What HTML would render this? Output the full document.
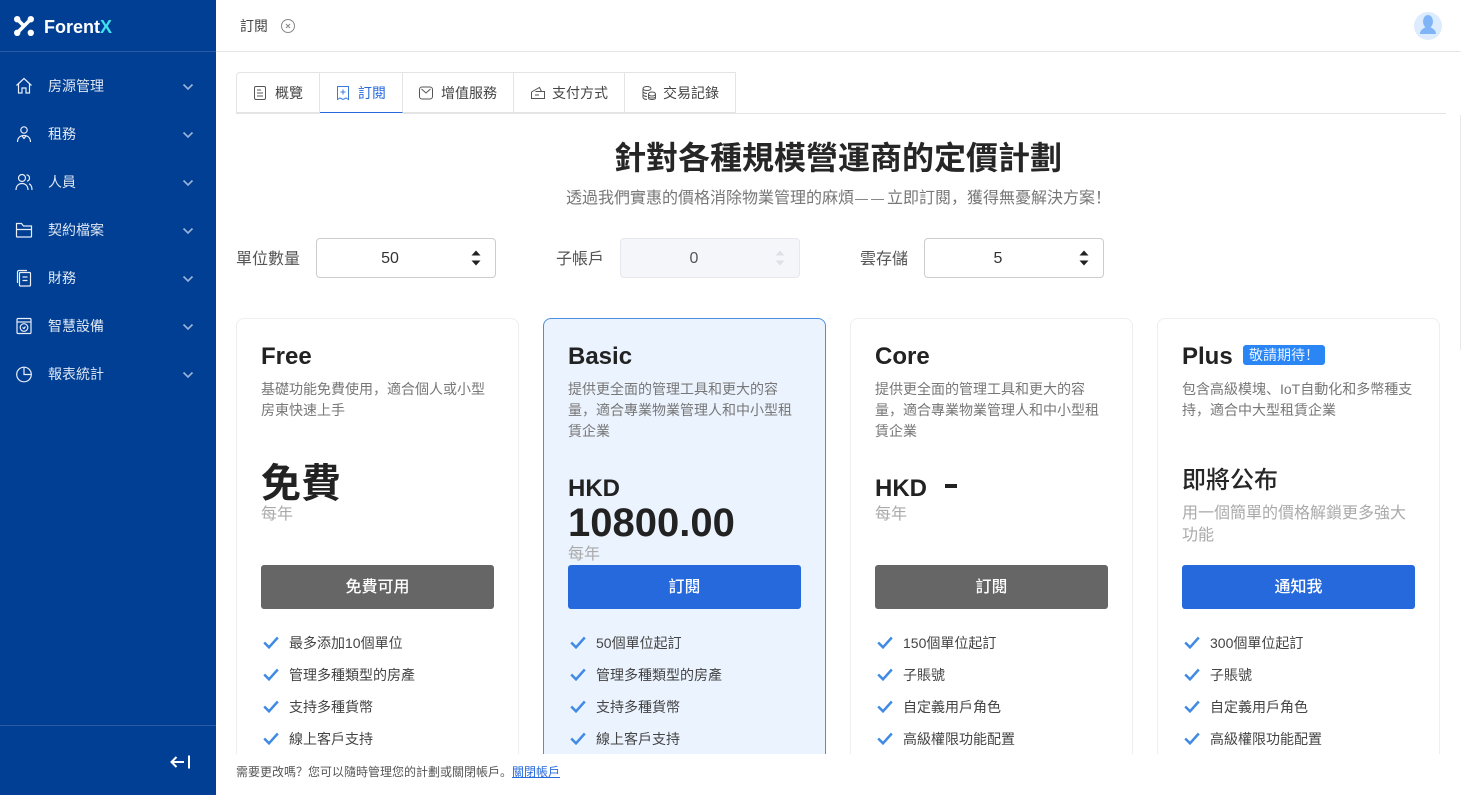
<!DOCTYPE html>
<html lang="zh-CN"><head><meta charset="utf-8"><title>ForentX</title>
<style>
*{box-sizing:border-box}
html,body{margin:0;padding:0;width:1461px;height:795px;overflow:hidden;background:#fff}
body{font-family:"Liberation Sans","Noto Sans CJK SC",sans-serif;color:#262626;position:relative}
.a{position:absolute;white-space:nowrap}
#side{position:absolute;left:0;top:0;width:216px;height:795px;background:#003f94}
.mi{position:absolute;left:48px;font-size:14px;line-height:20px;color:#dfe7f3;white-space:nowrap}
.chev{position:absolute;left:182px;width:12px;height:12px}
.ic{position:absolute;left:14px;width:20px;height:20px}
.tab{position:absolute;top:72px;height:41px;border:1px solid #e4e4e4;border-left:0;font-size:14px;line-height:41px;color:#444;white-space:nowrap}
.tab svg{position:absolute;top:12px;width:16px;height:16px}
.tab span{position:absolute;top:0}
.lb{position:absolute;top:249px;font-size:16px;line-height:22px;color:#555;white-space:nowrap}
.inp{position:absolute;top:238px;height:40px;border:1px solid #ccc;border-radius:4px;background:#fff;font-size:16px;line-height:40px;color:#333;text-align:center;padding-right:32px}
.inp svg{position:absolute;right:13px;top:10px;width:12px;height:18px}
.card{position:absolute;top:318px;width:283px;height:520px;border:1px solid #eee;border-radius:8px;background:#fff}
.card.b{background:#ebf3fe;border-color:#4a90e2}
.t{position:absolute;font-size:24px;font-weight:700;line-height:30px;color:#222;white-space:nowrap;top:342px}
.d{position:absolute;width:233px;font-size:14px;line-height:21px;color:#777;top:379px}
.yr{position:absolute;font-size:16px;line-height:20px;color:#aaa;white-space:nowrap}
.btn{position:absolute;top:565px;width:233px;height:44px;border-radius:3px;color:#fff;font-size:16px;line-height:45px;text-align:center;font-weight:500}
.g{background:#666}.bl{background:#2669dd}
.li{position:absolute;font-size:14px;line-height:20px;color:#444;white-space:nowrap}
.ck{position:absolute;width:16px;height:14px}
#foot{position:absolute;left:216px;top:754px;width:1245px;height:41px;background:#fff}
</style></head><body>

<div class="a" style="left:216px;top:51px;width:1245px;height:1px;background:#e6e6e6"></div>
<div class="a" style="left:240px;top:16px;font-size:14px;line-height:20px;color:#444">訂閱</div>
<svg class="a" style="left:280px;top:18px" width="16" height="16" viewBox="0 0 16 16" fill="none" stroke="#888"><circle cx="8" cy="8" r="6.500"/><path d="M6 6l4 4M10 6l-4 4"/></svg>
<svg class="a" style="left:1414px;top:12px" width="28" height="28" viewBox="0 0 28 28"><circle cx="14" cy="14" r="14" fill="#dcebfd"/><ellipse cx="14" cy="9.500" rx="5" ry="6.500" fill="#7fb5f7"/><path d="M6 22c0-4 3-5 5.500-7h5c2.500 2 5.500 3 5.500 7z" fill="#7fb5f7"/></svg>

<div class="tab" style="left:236px;width:84px;border-left:1px solid #e4e4e4;border-radius:4px 0 0 0"><svg style="left:15px" viewBox="0 0 16 16" fill="none" stroke="#555"><rect x="2.500" y="1.500" width="11" height="13" rx="1.500"/><path d="M5 5h4M5 8h6M5 11h6"/></svg><span style="left:38px">概覽</span></div>
<div class="tab" style="left:320px;width:83px;color:#2669dd;border-bottom:1px solid #2669dd"><svg style="left:15px" viewBox="0 0 16 16" fill="none" stroke="#3b7be0"><path d="M2.500 1.500h11v13l-2.500-1.500-3 1.500-3-1.500-2.500 1.500z"/><path d="M8 4.500v5M5.500 7h5"/></svg><span style="left:38px">訂閱</span></div>
<div class="tab" style="left:403px;width:111px"><svg style="left:15px" viewBox="0 0 16 16" fill="none" stroke="#555"><rect x="1.500" y="2" width="13" height="12" rx="2.500"/><path d="M3.500 4l4.500 4 4.500-4"/></svg><span style="left:38px">增值服務</span></div>
<div class="tab" style="left:514px;width:111px"><svg style="left:16px" viewBox="0 0 16 16" fill="none" stroke="#555"><path d="M1.500 7v6.500h13v-7h-9"/><path d="M1.500 7l8-4.500 2 4"/><path d="M5 10h4"/></svg><span style="left:38px">支付方式</span></div>
<div class="tab" style="left:625px;width:111px"><svg style="left:16px" viewBox="0 0 16 16" fill="none" stroke="#555"><ellipse cx="6" cy="3.500" rx="4" ry="2"/><path d="M2 3.500v9c0 1 2 2 4 2M2 6.500c0 1 2 2 4 2M2 9.500c0 1 2 2 4 2"/><ellipse cx="11" cy="9" rx="3.500" ry="2"/><path d="M7.500 9v4c0 1 1.500 1.500 3.500 1.500s3.500-.5 3.500-1.500V9M7.500 11.500c0 1 1.500 1.500 3.500 1.500s3.500-.5 3.500-1.500"/></svg><span style="left:38px">交易記錄</span></div>
<div class="a" style="left:236px;top:113px;width:84px;height:1px;background:#e4e4e4"></div>
<div class="a" style="left:403px;top:113px;width:1043px;height:1px;background:#e4e4e4"></div>
<div class="a" style="left:1460px;top:115px;width:1px;height:235px;background:#e8e8e8"></div>

<div class="a" style="left:216px;width:1245px;top:136px;text-align:center;font-size:32px;font-weight:700;line-height:44px;color:#262626;text-indent:-1px">針對各種規模營運商的定價計劃</div>
<div class="a" style="left:216px;width:1245px;top:187px;text-align:center;font-size:16px;line-height:24px;color:#777">透過我們實惠的價格消除物業管理的麻煩<span style="font-family:'Liberation Sans';font-size:13px;letter-spacing:3px;margin-left:1px">——</span>立即訂閱&#xFF0C;獲得無憂解決方案&#xFF01;</div>

<div class="lb" style="left:236px">單位數量</div>
<div class="inp" style="left:316px;width:180px">50<svg viewBox="0 0 12 18"><path d="M6 1.500l4.500 5h-9zM6 16.500l4.500-5h-9z" fill="#222"/></svg></div>
<div class="lb" style="left:556px">子帳戶</div>
<div class="inp" style="left:620px;width:180px;background:#f4f6fa;border-color:#e6e8ec;color:#555">0<svg viewBox="0 0 12 18"><path d="M6 1.500l4.500 5h-9zM6 16.500l4.500-5h-9z" fill="#dde0e5"/></svg></div>
<div class="lb" style="left:860px">雲存儲</div>
<div class="inp" style="left:924px;width:180px">5<svg viewBox="0 0 12 18"><path d="M6 1.500l4.500 5h-9zM6 16.500l4.500-5h-9z" fill="#222"/></svg></div>

<div class="card" style="left:236px"></div>
<div class="card b" style="left:543px"></div>
<div class="card" style="left:850px"></div>
<div class="card" style="left:1157px"></div>

<div class="t" style="left:261px">Free</div>
<div class="d" style="left:261px">基礎功能免費使用&#xFF0C;適合個人或小型房東快速上手</div>
<div class="a" style="left:261px;top:459px;font-size:40px;font-weight:700;line-height:50px;color:#222">免費</div>
<div class="yr" style="left:261px;top:505px">每年</div>
<div class="btn g" style="left:261px">免費可用</div>

<div class="t" style="left:568px">Basic</div>
<div class="d" style="left:568px">提供更全面的管理工具和更大的容量&#xFF0C;適合專業物業管理人和中小型租賃企業</div>
<div class="a" style="left:568px;top:474px;font-size:24px;font-weight:700;line-height:30px;color:#222">HKD</div>
<div class="a" style="left:568px;top:498px;font-size:40px;font-weight:700;line-height:50px;color:#222">10800.00</div>
<div class="yr" style="left:568px;top:545px">每年</div>
<div class="btn bl" style="left:568px">訂閱</div>

<div class="t" style="left:875px">Core</div>
<div class="d" style="left:875px">提供更全面的管理工具和更大的容量&#xFF0C;適合專業物業管理人和中小型租賃企業</div>
<div class="a" style="left:875px;top:474px;font-size:24px;font-weight:700;line-height:30px;color:#222">HKD</div>
<div class="a" style="left:945px;top:484px;width:12px;height:4px;background:#222"></div>
<div class="yr" style="left:875px;top:505px">每年</div>
<div class="btn g" style="left:875px">訂閱</div>

<div class="t" style="left:1182px">Plus</div>
<div class="a" style="left:1243px;top:345px;width:82px;height:20px;background:#2b86f5;border-radius:3px;color:#e8f2ff;font-size:14px;line-height:20px;padding-left:6px">敬請期待&#xFF01;</div>
<div class="d" style="left:1182px">包含高級模塊&#x3001;IoT自動化和多幣種支持&#xFF0C;適合中大型租賃企業</div>
<div class="a" style="left:1182px;top:465px;font-size:24px;font-weight:500;line-height:32px;color:#262626">即將公布</div>
<div class="a" style="left:1182px;top:503px;width:233px;white-space:normal;font-size:16px;line-height:22px;color:#aaa">用一個簡單的價格解鎖更多強大功能</div>
<div class="btn bl" style="left:1182px">通知我</div>

<svg width="0" height="0" style="position:absolute"><defs><symbol id="ck" viewBox="0 0 16 14"><path d="M1.200 6.500l4.800 4.800 8.800-9.800" fill="none" stroke="#3f8ae6" stroke-width="2.500"/></symbol></defs></svg>

<svg class="ck" style="left:263px;top:636px"><use href="#ck"/></svg><div class="li" style="left:289px;top:633px">最多添加10個單位</div>
<svg class="ck" style="left:263px;top:668px"><use href="#ck"/></svg><div class="li" style="left:289px;top:665px">管理多種類型的房產</div>
<svg class="ck" style="left:263px;top:700px"><use href="#ck"/></svg><div class="li" style="left:289px;top:697px">支持多種貨幣</div>
<svg class="ck" style="left:263px;top:732px"><use href="#ck"/></svg><div class="li" style="left:289px;top:729px">線上客戶支持</div>

<svg class="ck" style="left:570px;top:636px"><use href="#ck"/></svg><div class="li" style="left:596px;top:633px">50個單位起訂</div>
<svg class="ck" style="left:570px;top:668px"><use href="#ck"/></svg><div class="li" style="left:596px;top:665px">管理多種類型的房產</div>
<svg class="ck" style="left:570px;top:700px"><use href="#ck"/></svg><div class="li" style="left:596px;top:697px">支持多種貨幣</div>
<svg class="ck" style="left:570px;top:732px"><use href="#ck"/></svg><div class="li" style="left:596px;top:729px">線上客戶支持</div>

<svg class="ck" style="left:877px;top:636px"><use href="#ck"/></svg><div class="li" style="left:903px;top:633px">150個單位起訂</div>
<svg class="ck" style="left:877px;top:668px"><use href="#ck"/></svg><div class="li" style="left:903px;top:665px">子賬號</div>
<svg class="ck" style="left:877px;top:700px"><use href="#ck"/></svg><div class="li" style="left:903px;top:697px">自定義用戶角色</div>
<svg class="ck" style="left:877px;top:732px"><use href="#ck"/></svg><div class="li" style="left:903px;top:729px">高級權限功能配置</div>

<svg class="ck" style="left:1184px;top:636px"><use href="#ck"/></svg><div class="li" style="left:1210px;top:633px">300個單位起訂</div>
<svg class="ck" style="left:1184px;top:668px"><use href="#ck"/></svg><div class="li" style="left:1210px;top:665px">子賬號</div>
<svg class="ck" style="left:1184px;top:700px"><use href="#ck"/></svg><div class="li" style="left:1210px;top:697px">自定義用戶角色</div>
<svg class="ck" style="left:1184px;top:732px"><use href="#ck"/></svg><div class="li" style="left:1210px;top:729px">高級權限功能配置</div>

<div id="foot"><div class="a" style="left:20px;top:8px;font-size:12px;line-height:20px;color:#555">需要更改嗎&#xFF1F;您可以隨時管理您的計劃或關閉帳戶&#x3002;<span style="color:#2669dd;text-decoration:underline">關閉帳戶</span></div></div>

<div id="side">
<svg class="a" style="left:14px;top:16px" width="20" height="20" viewBox="0 0 20 20"><path d="M3.500 3.500L10 10" stroke="#fff" stroke-width="3.600"/><path d="M16.500 3.500L3.500 16.500" stroke="#fff" stroke-width="3.600"/><circle cx="3.200" cy="3.200" r="3.200" fill="#fff"/><circle cx="16.800" cy="3.200" r="3.200" fill="#fff"/><circle cx="3.200" cy="16.800" r="3.200" fill="#fff"/><circle cx="16.800" cy="16.800" r="3.200" fill="#fff"/></svg>
<div class="a" style="left:44px;top:16px;font-size:18px;font-weight:700;line-height:22px;color:#fff">Forent<span style="color:#3fe0ef">X</span></div>
<div class="a" style="left:0;top:51px;width:216px;height:1px;background:#2a5ba6"></div>

<svg class="ic" style="top:76px" viewBox="0 0 20 20" fill="none" stroke="#e8edf6" stroke-width="1.200"><path d="M2.500 9.500L10 2.500l7.500 7M4.500 8v9h3.500v-5h4v5h3.500V8"/></svg>
<div class="mi" style="top:76px">房源管理</div>
<svg class="ic" style="top:124px" viewBox="0 0 20 20" fill="none" stroke="#e8edf6" stroke-width="1.200"><circle cx="10" cy="6" r="3.200"/><path d="M3.500 18c0-4 2.500-6.500 6.500-6.500s6.500 2.500 6.500 6.500M8 12l2 2.500 2-2.500"/></svg>
<div class="mi" style="top:124px">租務</div>
<svg class="ic" style="top:172px" viewBox="0 0 20 20" fill="none" stroke="#e8edf6" stroke-width="1.200"><circle cx="8" cy="6" r="3.500"/><path d="M2 18c0-4 2.500-6.500 6-6.500s6 2.500 6 6.500M12.500 2.800c2 .3 3 1.700 3 3.200s-1 2.800-2.500 3.200M15 11.800c2 .8 3 2.800 3 6.200"/></svg>
<div class="mi" style="top:172px">人員</div>
<svg class="ic" style="top:220px" viewBox="0 0 20 20" fill="none" stroke="#e8edf6" stroke-width="1.200"><path d="M2.500 16.500v-13h5l2 2.500h8v10.500a.5.5 0 0 1-.5.5H3a.5.5 0 0 1-.5-.5zM2.500 9.500h15"/></svg>
<div class="mi" style="top:220px">契約檔案</div>
<svg class="ic" style="top:268px" viewBox="0 0 20 20" fill="none" stroke="#e8edf6" stroke-width="1.200"><path d="M3.500 15V4A1.500 1.500 0 0 1 5 2.500h8"/><rect x="5.500" y="4.500" width="11" height="13.500" rx="1"/><path d="M8.500 9h5M8.500 12.500h5"/></svg>
<div class="mi" style="top:268px">財務</div>
<svg class="ic" style="top:316px" viewBox="0 0 20 20" fill="none" stroke="#e8edf6" stroke-width="1.200"><rect x="3" y="2.500" width="14" height="15" rx="1"/><path d="M3 6h14"/><circle cx="10" cy="11.500" r="3.800"/><path d="M8.500 11.500l1.500 1 1.500-2"/></svg>
<div class="mi" style="top:316px">智慧設備</div>
<svg class="ic" style="top:364px" viewBox="0 0 20 20" fill="none" stroke="#e8edf6" stroke-width="1.200"><circle cx="10" cy="10.500" r="7.300"/><path d="M10 3.200v7.300h7.300"/></svg>
<div class="mi" style="top:364px">報表統計</div>

<svg class="chev" style="top:81px" viewBox="0 0 12 12" fill="none" stroke="#9db3d6" stroke-width="1.600"><path d="M1.500 3.500L6 8l4.500-4.500"/></svg>
<svg class="chev" style="top:129px" viewBox="0 0 12 12" fill="none" stroke="#9db3d6" stroke-width="1.600"><path d="M1.500 3.500L6 8l4.500-4.500"/></svg>
<svg class="chev" style="top:177px" viewBox="0 0 12 12" fill="none" stroke="#9db3d6" stroke-width="1.600"><path d="M1.500 3.500L6 8l4.500-4.500"/></svg>
<svg class="chev" style="top:225px" viewBox="0 0 12 12" fill="none" stroke="#9db3d6" stroke-width="1.600"><path d="M1.500 3.500L6 8l4.500-4.500"/></svg>
<svg class="chev" style="top:273px" viewBox="0 0 12 12" fill="none" stroke="#9db3d6" stroke-width="1.600"><path d="M1.500 3.500L6 8l4.500-4.500"/></svg>
<svg class="chev" style="top:321px" viewBox="0 0 12 12" fill="none" stroke="#9db3d6" stroke-width="1.600"><path d="M1.500 3.500L6 8l4.500-4.500"/></svg>
<svg class="chev" style="top:369px" viewBox="0 0 12 12" fill="none" stroke="#9db3d6" stroke-width="1.600"><path d="M1.500 3.500L6 8l4.500-4.500"/></svg>

<div class="a" style="left:0;top:725px;width:216px;height:1px;background:#2a5ba6"></div>
<svg class="a" style="left:169px;top:754px" width="22" height="16" viewBox="0 0 22 16" fill="none" stroke="#fff" stroke-width="2"><path d="M15 8H2M7.500 3L2.500 8l5 5"/><path d="M20 1.500v13"/></svg>
</div>
</body></html>
